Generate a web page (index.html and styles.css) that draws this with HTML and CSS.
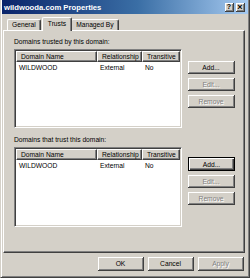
FILE: index.html
```html
<!DOCTYPE html>
<html lang="en">
<head>
    <meta charset="UTF-8">
    <title>wildwooda.com Properties</title>
    <link rel="stylesheet" href="styles.css">
</head>
<body>
    <div class="window">
        <div class="titlebar">
            <span class="title">wildwooda.com Properties</span>
            <span class="title-btn">?</span>
            <span class="title-btn close">&#215;</span>
        </div>
        <div class="tabs">
            <div class="tab">General</div>
            <div class="tab selected">Trusts</div>
            <div class="tab">Managed By</div>
        </div>
        <div class="panel">
            <div class="group-label">Domains trusted by this domain:</div>
            <div class="group">
                <div class="list">
                    <div class="list-head">
                        <div class="col c1">Domain Name</div>
                        <div class="col c2">Relationship</div>
                        <div class="col c3">Transitive</div>
                    </div>
                    <div class="list-row">
                        <div class="cell c1">WILDWOOD</div>
                        <div class="cell c2">External</div>
                        <div class="cell c3">No</div>
                    </div>
                </div>
                <div class="side-buttons">
                    <button class="btn">Add...</button>
                    <button class="btn disabled">Edit...</button>
                    <button class="btn disabled">Remove</button>
                </div>
            </div>

            <div class="group-label second">Domains that trust this domain:</div>
            <div class="group">
                <div class="list tall">
                    <div class="list-head">
                        <div class="col c1">Domain Name</div>
                        <div class="col c2">Relationship</div>
                        <div class="col c3">Transitive</div>
                    </div>
                    <div class="list-row">
                        <div class="cell c1">WILDWOOD</div>
                        <div class="cell c2">External</div>
                        <div class="cell c3">No</div>
                    </div>
                </div>
                <div class="side-buttons lower">
                    <button class="btn default">Add...</button>
                    <button class="btn disabled">Edit...</button>
                    <button class="btn disabled">Remove</button>
                </div>
            </div>
        </div>
        <div class="footer">
            <button class="btn wide">OK</button>
            <button class="btn wide">Cancel</button>
            <button class="btn wide disabled">Apply</button>
        </div>
    </div>
</body>
</html>
```

FILE: styles.css
```css
body {
    margin: 0;
    background-color: #d4d0c8;
    font-family: "Liberation Sans", Arial, sans-serif;
    font-size: 6.7px;
    color: #000;
}
.window {
    width: 250px;
    height: 278px;
    box-sizing: border-box;
    background-color: #d4d0c8;
    border-left: 1px solid #d4d0c8;
    border-right: 1px solid #404040;
    border-bottom: 1px solid #404040;
    box-shadow: inset 1px 0 #fff, inset -1px -1px #808080;
    padding: 0 1px 0 1px;
}
.titlebar {
    height: 14px;
    display: flex;
    align-items: center;
    padding: 0 3px 0 2px;
    background: linear-gradient(to right, #0a246a, #3a6ea5 55%, #a6caf0);
}
.title {
    flex: 1;
    color: #fff;
    font-weight: bold;
    font-size: 7.7px;
}
.title-btn {
    width: 8px;
    height: 8px;
    margin-left: 1px;
    background-color: #d4d0c8;
    border-right: 1px solid #404040;
    border-bottom: 1px solid #404040;
    box-shadow: inset 1px 1px #fff, inset -1px -1px #808080;
    font-size: 7px;
    font-weight: bold;
    line-height: 8px;
    text-align: center;
}
.title-btn.close {
    margin-left: 2px;
    font-size: 9px;
}
.tabs {
    display: flex;
    align-items: flex-end;
    height: 16px;
    padding-left: 5px;
}
.tab {
    height: 10px;
    line-height: 10px;
    padding: 0 4px;
    background-color: #d4d0c8;
    border-top: 1px solid #fff;
    border-left: 1px solid #fff;
    border-right: 1px solid #404040;
    box-shadow: inset -1px 0 #808080;
    border-radius: 2px 2px 0 0;
    margin-right: 1px;
}
.tab.selected {
    height: 13px;
    line-height: 12px;
    margin: 0 -1px 0 0;
    position: relative;
    z-index: 1;
    margin-bottom: -1px;
    padding: 0 5px;
}
.panel {
    height: 223px;
    box-sizing: border-box;
    margin: 0 3px 0 1px;
    border-top: 1px solid #fff;
    border-left: 1px solid #fff;
    border-right: 1px solid #404040;
    border-bottom: 1px solid #404040;
    box-shadow: inset -1px -1px #808080;
    padding: 7px 0 0 10px;
}
.group-label {
    height: 8px;
    line-height: 8px;
    margin-bottom: 3px;
}
.group-label.second {
    margin-top: 8px;
}
.group {
    display: flex;
}
.list {
    width: 168px;
    height: 79px;
    box-sizing: border-box;
    background-color: #fff;
    border-top: 1px solid #808080;
    border-left: 1px solid #808080;
    border-right: 1px solid #fff;
    border-bottom: 1px solid #fff;
    box-shadow: inset 1px 1px #404040, inset -1px -1px #d4d0c8;
    padding: 1px;
}
.list.tall {
    height: 80px;
}
.list-head {
    display: flex;
    height: 11px;
}
.col {
    box-sizing: border-box;
    height: 11px;
    line-height: 10px;
    padding-left: 4px;
    background-color: #d4d0c8;
    border-top: 1px solid #fff;
    border-left: 1px solid #fff;
    border-right: 1px solid #404040;
    border-bottom: 1px solid #404040;
    box-shadow: inset -1px -1px #808080;
    white-space: nowrap;
    overflow: hidden;
}
.list-row {
    display: flex;
    height: 9px;
    line-height: 9px;
    margin-top: 1px;
}
.cell {
    box-sizing: border-box;
    padding-left: 3px;
}
.c1 { width: 81px; }
.c2 { width: 45px; }
.c3 { width: 38px; }
.side-buttons {
    display: flex;
    flex-direction: column;
    gap: 4px;
    margin-left: 6px;
    padding-top: 12px;
}
.side-buttons.lower {
    padding-top: 10px;
}
.btn {
    width: 47px;
    height: 13px;
    box-sizing: border-box;
    padding: 0;
    margin: 0;
    font-family: "Liberation Sans", Arial, sans-serif;
    font-size: 6.7px;
    color: #000;
    background-color: #d4d0c8;
    border: none;
    border-right: 1px solid #404040;
    border-bottom: 1px solid #404040;
    box-shadow: inset 1px 1px #fff, inset -1px -1px #808080;
}
.btn.default {
    border: 1px solid #000;
    box-shadow: inset 1px 1px #fff, inset -1px -1px #404040, inset -2px -2px #808080;
    height: 14px;
}
.btn.disabled {
    color: #808080;
    text-shadow: 1px 1px #fff;
}
.footer {
    display: flex;
    justify-content: flex-end;
    gap: 4px;
    padding: 4px 4px 0 0;
}
.btn.wide {
    width: 46px;
    height: 14px;
}
```
